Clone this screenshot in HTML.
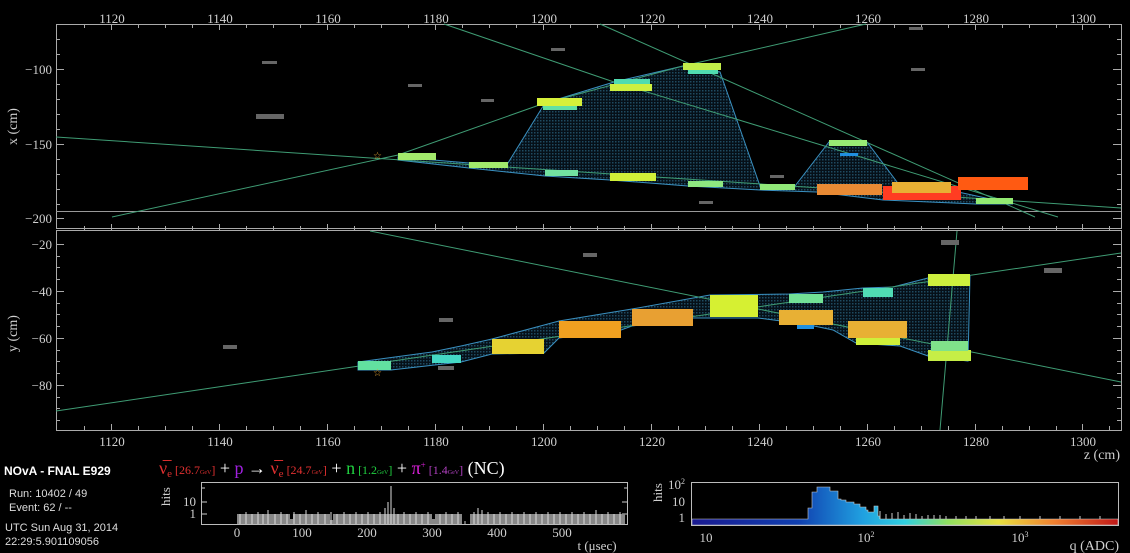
<!DOCTYPE html>
<html><head><meta charset="utf-8"><style>
html,body{margin:0;padding:0;background:#000;width:1130px;height:553px;overflow:hidden}
svg{display:block}
text{font-family:"Liberation Serif",serif;fill:#d0d0d0}
.s{font-family:"Liberation Sans",sans-serif}
</style></head><body>
<svg width="1130" height="553" viewBox="0 0 1130 553">
<defs>
<pattern id="dot" width="3" height="3" patternUnits="userSpaceOnUse"><rect width="3" height="3" fill="#061018"/><rect width="1.5" height="1.5" fill="#1f4a60"/></pattern>
</defs>
<!-- frames -->
<rect x="56.5" y="24.5" width="1065" height="204" fill="none" stroke="#aaa"/>
<rect x="56.5" y="230.5" width="1065" height="200" fill="none" stroke="#aaa"/>
<line x1="56" y1="211.5" x2="1121" y2="211.5" stroke="#999"/>
<g stroke="#aaa" stroke-width="1">
<path d="M84.5 24v4M111.5 24v6M138.5 24v4M165.5 24v4M192.5 24v4M219.5 24v6M246.5 24v4M273.5 24v4M300.5 24v4M327.5 24v6M354.5 24v4M381.5 24v4M408.5 24v4M435.5 24v6M462.5 24v4M489.5 24v4M516.5 24v4M543.5 24v6M570.5 24v4M597.5 24v4M624.5 24v4M651.5 24v6M678.5 24v4M705.5 24v4M732.5 24v4M759.5 24v6M786.5 24v4M813.5 24v4M840.5 24v4M867.5 24v6M894.5 24v4M921.5 24v4M948.5 24v4M975.5 24v6M1002.5 24v4M1029.5 24v4M1056.5 24v4M1082.5 24v6M1109.5 24v4"/>
<path d="M84.5 230v-4M111.5 230v-6M138.5 230v-4M165.5 230v-4M192.5 230v-4M219.5 230v-6M246.5 230v-4M273.5 230v-4M300.5 230v-4M327.5 230v-6M354.5 230v-4M381.5 230v-4M408.5 230v-4M435.5 230v-6M462.5 230v-4M489.5 230v-4M516.5 230v-4M543.5 230v-6M570.5 230v-4M597.5 230v-4M624.5 230v-4M651.5 230v-6M678.5 230v-4M705.5 230v-4M732.5 230v-4M759.5 230v-6M786.5 230v-4M813.5 230v-4M840.5 230v-4M867.5 230v-6M894.5 230v-4M921.5 230v-4M948.5 230v-4M975.5 230v-6M1002.5 230v-4M1029.5 230v-4M1056.5 230v-4M1082.5 230v-6M1109.5 230v-4"/>
<path d="M84.5 430v-4M111.5 430v-6M138.5 430v-4M165.5 430v-4M192.5 430v-4M219.5 430v-6M246.5 430v-4M273.5 430v-4M300.5 430v-4M327.5 430v-6M354.5 430v-4M381.5 430v-4M408.5 430v-4M435.5 430v-6M462.5 430v-4M489.5 430v-4M516.5 430v-4M543.5 430v-6M570.5 430v-4M597.5 430v-4M624.5 430v-4M651.5 430v-6M678.5 430v-4M705.5 430v-4M732.5 430v-4M759.5 430v-6M786.5 430v-4M813.5 430v-4M840.5 430v-4M867.5 430v-6M894.5 430v-4M921.5 430v-4M948.5 430v-4M975.5 430v-6M1002.5 430v-4M1029.5 430v-4M1056.5 430v-4M1082.5 430v-6M1109.5 430v-4"/>
<path d="M56 39.5h4M56 54.5h4M56 69.5h8M56 84.5h4M56 99.5h4M56 114.5h4M56 129.5h4M56 144.5h8M56 159.5h4M56 174.5h4M56 189.5h4M56 204.5h4M56 218.5h8"/>
<path d="M1121 39.5h-4M1121 54.5h-4M1121 69.5h-8M1121 84.5h-4M1121 99.5h-4M1121 114.5h-4M1121 129.5h-4M1121 144.5h-8M1121 159.5h-4M1121 174.5h-4M1121 189.5h-4M1121 204.5h-4M1121 218.5h-8"/>
<path d="M56 244.5h8M56 256.5h4M56 267.5h4M56 279.5h4M56 291.5h8M56 303.5h4M56 314.5h4M56 326.5h4M56 338.5h8M56 350.5h4M56 361.5h4M56 373.5h4M56 385.5h8M56 397.5h4M56 408.5h4M56 420.5h4"/>
<path d="M1121 244.5h-8M1121 256.5h-4M1121 267.5h-4M1121 279.5h-4M1121 291.5h-8M1121 303.5h-4M1121 314.5h-4M1121 326.5h-4M1121 338.5h-8M1121 350.5h-4M1121 361.5h-4M1121 373.5h-4M1121 385.5h-8M1121 397.5h-4M1121 408.5h-4M1121 420.5h-4"/>
</g>
<!-- axis labels -->
<g font-size="13" text-anchor="middle">
<text x="112" y="23">1120</text><text x="220" y="23">1140</text><text x="328" y="23">1160</text><text x="436" y="23">1180</text><text x="544" y="23">1200</text><text x="652" y="23">1220</text><text x="760" y="23">1240</text><text x="868" y="23">1260</text><text x="976" y="23">1280</text><text x="1083" y="23">1300</text>
<text x="112" y="446">1120</text><text x="220" y="446">1140</text><text x="328" y="446">1160</text><text x="436" y="446">1180</text><text x="544" y="446">1200</text><text x="652" y="446">1220</text><text x="760" y="446">1240</text><text x="868" y="446">1260</text><text x="976" y="446">1280</text><text x="1083" y="446">1300</text>
</g>
<g font-size="13" text-anchor="end">
<text x="52" y="74">−100</text><text x="52" y="149">−150</text><text x="52" y="223">−200</text>
<text x="52" y="249">−20</text><text x="52" y="296">−40</text><text x="52" y="343">−60</text><text x="52" y="390">−80</text>
<text x="1120" y="459" font-size="14">z (cm)</text>
</g>
<text font-size="14" transform="translate(17,145) rotate(-90)">x (cm)</text>
<text font-size="14" transform="translate(17,352) rotate(-90)">y (cm)</text>

<!-- TOP panel -->
<polygon points="398,157 469,163 508,163 545,103 614,82 683,66 720,72 760,186 795,186 829,142 867,142 900,186 940,188 1013,204 976,204 883,200 817,192 760,190 688,186 610,180 545,176 469,168 398,160" fill="url(#dot)" stroke="#3a90c0" stroke-width="1"/>
<g stroke="#3f9c74" stroke-width="1" fill="none">
<line x1="56" y1="137" x2="1121" y2="208"/>
<polyline points="112,217 398,155 545,103 683,66 866,24"/>
<polyline points="444,24 614,82 1058,217"/>
<line x1="600" y1="24" x2="1035" y2="217"/>
</g>
<g fill="#666">
<rect x="256" y="114" width="28" height="5"/><rect x="262" y="61" width="15" height="3"/><rect x="408" y="84" width="14" height="3"/><rect x="481" y="99" width="13" height="3"/><rect x="551" y="48" width="14" height="3"/><rect x="909" y="27" width="14" height="3"/><rect x="911" y="68" width="14" height="3"/><rect x="699" y="201" width="14" height="3"/><rect x="770" y="175" width="14" height="3"/>
</g>
<rect x="398" y="153" width="38" height="7" fill="#a2ea6c"/>
<rect x="469" y="162" width="39" height="6" fill="#a2ea6c"/>
<rect x="543" y="105" width="34" height="5" fill="#62e0a4"/>
<rect x="537" y="98" width="45" height="8" fill="#d6f03a"/>
<rect x="614" y="79" width="36" height="6" fill="#50dcb0"/>
<rect x="610" y="84" width="42" height="7" fill="#cdf040"/>
<rect x="688" y="69" width="30" height="5" fill="#50dcb0"/>
<rect x="683" y="63" width="38" height="7" fill="#c2ee4a"/>
<rect x="545" y="170" width="33" height="6" fill="#72e2a0"/>
<rect x="610" y="173" width="46" height="8" fill="#d0f038"/>
<rect x="688" y="181" width="35" height="6" fill="#8ee880"/>
<rect x="760" y="184" width="35" height="6" fill="#90e878"/>
<rect x="829" y="140" width="38" height="6" fill="#98ea74"/>
<rect x="840" y="153" width="18" height="3" fill="#2090e0"/>
<rect x="817" y="184" width="65" height="11" fill="#e88a34"/>
<rect x="883" y="186" width="78" height="14" fill="#ff3c22"/>
<rect x="892" y="182" width="59" height="11" fill="#e8b034"/>
<rect x="958" y="177" width="70" height="13" fill="#ff5a12"/>
<rect x="976" y="198" width="37" height="6" fill="#92ea72"/>
<text x="373" y="159" font-size="10" style="fill:#e0a030">☆</text>

<!-- BOTTOM panel -->
<polygon points="358,362 432,352 461,346 492,339 559,321 632,309 710,295 789,294 823,292 863,288 893,287 928,278 970,276 968,361 928,356 900,346 856,343 833,330 814,326 789,322 758,318 710,318 693,318 632,326 621,330 559,338 544,353 492,354 461,362 391,370 358,370" fill="url(#dot)" stroke="#3a90c0" stroke-width="1"/>
<g stroke="#3f9c74" stroke-width="1" fill="none">
<line x1="56" y1="411" x2="1121" y2="253"/>
<line x1="370" y1="231" x2="1121" y2="382"/>
<line x1="957" y1="231" x2="940" y2="430"/>
</g>
<g fill="#666">
<rect x="583" y="253" width="14" height="4"/><rect x="439" y="318" width="14" height="4"/><rect x="223" y="345" width="14" height="4"/><rect x="438" y="366" width="16" height="4"/><rect x="941" y="240" width="18" height="5"/><rect x="1044" y="268" width="18" height="5"/>
</g>
<rect x="358" y="361" width="33" height="9" fill="#62e0a0"/>
<rect x="432" y="355" width="29" height="8" fill="#44d8c4"/>
<rect x="492" y="339" width="52" height="15" fill="#e6d232"/>
<rect x="559" y="321" width="62" height="17" fill="#f0a020"/>
<rect x="632" y="309" width="61" height="17" fill="#e8a032"/>
<rect x="710" y="295" width="48" height="22" fill="#d6f032"/>
<rect x="789" y="294" width="34" height="9" fill="#72e296"/>
<rect x="797" y="325" width="17" height="4" fill="#2090e0"/>
<rect x="779" y="310" width="54" height="15" fill="#e8b034"/>
<rect x="863" y="288" width="30" height="9" fill="#50dcb4"/>
<rect x="856" y="337" width="44" height="8" fill="#cff03a"/>
<rect x="848" y="321" width="59" height="17" fill="#e8b034"/>
<rect x="928" y="274" width="42" height="12" fill="#cdf03e"/>
<rect x="928" y="350" width="43" height="11" fill="#c6ee46"/>
<rect x="931" y="341" width="37" height="10" fill="#80e28a"/>
<text x="373" y="376" font-size="10" style="fill:#e0a030">☆</text>

<!-- info -->
<text class="s" x="4" y="475" font-size="12" font-weight="bold" style="fill:#fff">NOvA - FNAL E929</text>
<text class="s" x="9" y="497" font-size="11" style="fill:#ddd">Run:  10402 / 49</text>
<text class="s" x="9" y="511" font-size="11" style="fill:#ddd">Event: 62 / --</text>
<text class="s" x="5" y="531" font-size="11" style="fill:#ddd">UTC Sun Aug 31, 2014</text>
<text class="s" x="5" y="545" font-size="11" style="fill:#ddd">22:29:5.901109056</text>

<text x="159" y="474" font-size="18"><tspan style="fill:#e03030">ν̅</tspan><tspan font-size="11" dy="3" style="fill:#e03030">e</tspan><tspan dy="-3" font-size="12" style="fill:#e03030"> [26.7<tspan font-size="6">GeV</tspan>]</tspan><tspan style="fill:#fff"> + </tspan><tspan style="fill:#a020e0">p</tspan><tspan style="fill:#fff"> → </tspan><tspan style="fill:#e03030">ν̅</tspan><tspan font-size="11" dy="3" style="fill:#e03030">e</tspan><tspan dy="-3" font-size="12" style="fill:#e03030"> [24.7<tspan font-size="6">GeV</tspan>]</tspan><tspan style="fill:#fff"> + </tspan><tspan style="fill:#20d040">n</tspan><tspan font-size="12" style="fill:#20d040"> [1.2<tspan font-size="6">GeV</tspan>]</tspan><tspan style="fill:#fff"> + </tspan><tspan style="fill:#e020e0">π</tspan><tspan font-size="9" dy="-6" style="fill:#e020e0">+</tspan><tspan dy="6" font-size="12" style="fill:#b040c0"> [1.4<tspan font-size="6">GeV</tspan>]</tspan><tspan style="fill:#fff"> (NC)</tspan></text>

<!-- time hist -->
<rect x="201.5" y="482.5" width="426" height="42" fill="none" stroke="#bbb"/>
<g stroke="#ccc">
<path d="M237.5 524v-4M270 524v-3M302.5 524v-4M335 524v-3M367.5 524v-4M400 524v-3M432.5 524v-4M465 524v-3M497.5 524v-4M530 524v-3M562.5 524v-4M595 524v-3M202 502h5M202 514h5M627 502h-5M627 514h-5M627 488h-3M202 488h3"/>
</g>
<path d="M237 524V514H290V519H293V514H330V520H333V514H432V519H435V514H462V524Z M470 524V514H625V524Z" fill="#888"/>
<g stroke="#ddd" stroke-width="1">
<path d="M240 524v-10M246 524v-12M252 524v-10M258 524v-12M263 524v-10M268 524v-14M275 524v-10M281 524v-12M287 524v-10M294 524v-12M300 524v-10M306 524v-14M312 524v-10M318 524v-12M325 524v-10M331 524v-12M337 524v-10M344 524v-12M350 524v-10M356 524v-12M362 524v-10M368 524v-12M374 524v-10M380 524v-12M385 524v-16M388 524v-22M391 524v-38M394 524v-16M398 524v-10M404 524v-12M410 524v-10M416 524v-12M422 524v-10M428 524v-12M440 524v-10M446 524v-12M452 524v-10M458 524v-12M474 524v-12M478 524v-16M482 524v-14M488 524v-12M494 524v-10M500 524v-12M506 524v-10M512 524v-12M518 524v-10M524 524v-12M530 524v-10M536 524v-12M542 524v-10M548 524v-12M554 524v-10M560 524v-12M566 524v-10M572 524v-12M578 524v-10M584 524v-12M590 524v-10M596 524v-14M602 524v-10M608 524v-12M614 524v-10M620 524v-12"/>
</g>
<g font-size="13" text-anchor="middle">
<text x="237" y="537">0</text><text x="302" y="537">100</text><text x="367" y="537">200</text><text x="432" y="537">300</text><text x="497" y="537">400</text><text x="562" y="537">500</text>
<text x="597" y="550">t (μsec)</text>
</g>
<text x="196" y="506" font-size="13" text-anchor="end">10</text><text x="196" y="518" font-size="13" text-anchor="end">1</text>
<text font-size="13" transform="translate(170,506) rotate(-90)">hits</text>

<!-- q hist -->
<defs><linearGradient id="rb" x1="0" x2="1"><stop offset="0" stop-color="#1a1a90"/><stop offset="0.25" stop-color="#1040b0"/><stop offset="0.4" stop-color="#20a0e0"/><stop offset="0.5" stop-color="#30d0e0"/><stop offset="0.6" stop-color="#90e060"/><stop offset="0.72" stop-color="#e8e040"/><stop offset="0.85" stop-color="#f08030"/><stop offset="1" stop-color="#c01818"/></linearGradient></defs>
<rect x="691.5" y="482.5" width="427" height="43" fill="none" stroke="#bbb"/>
<path d="M692 525V519H808V508H812V492H817V487H830V491H838V499H841V500H846V502H854V504H860V507H866V510H868V512H874V506H878V516H880V519H1118V525Z" fill="url(#rb)" stroke="#ccc" stroke-width="0.6"/>
<g stroke="#ccc"><path d="M880 519v-8M886 519v-5M892 519v-6M898 519v-7M904 519v-4M910 519v-6M916 519v-5M922 519v-3M928 519v-4M934 519v-4M940 519v-4M946 519v-3M956 519v-3M966 519v-3M976 519v-3M990 519v-3M1004 519v-3M1020 519v-3M1040 519v-3M1060 519v-3M1080 519v-3M1100 519v-3"/></g>
<g font-size="13" text-anchor="middle"><text x="706" y="542">10</text><text x="866" y="542">10<tspan font-size="8" dy="-5">2</tspan></text><text x="1020" y="542">10<tspan font-size="8" dy="-5">3</tspan></text></g>
<text x="1119" y="550" font-size="14" text-anchor="end">q (ADC)</text>
<text x="685" y="489" font-size="13" text-anchor="end">10<tspan font-size="8" dy="-5">2</tspan></text><text x="685" y="506" font-size="13" text-anchor="end">10</text><text x="685" y="522" font-size="13" text-anchor="end">1</text>
<text font-size="13" transform="translate(662,502) rotate(-90)">hits</text>
</svg>
</body></html>
